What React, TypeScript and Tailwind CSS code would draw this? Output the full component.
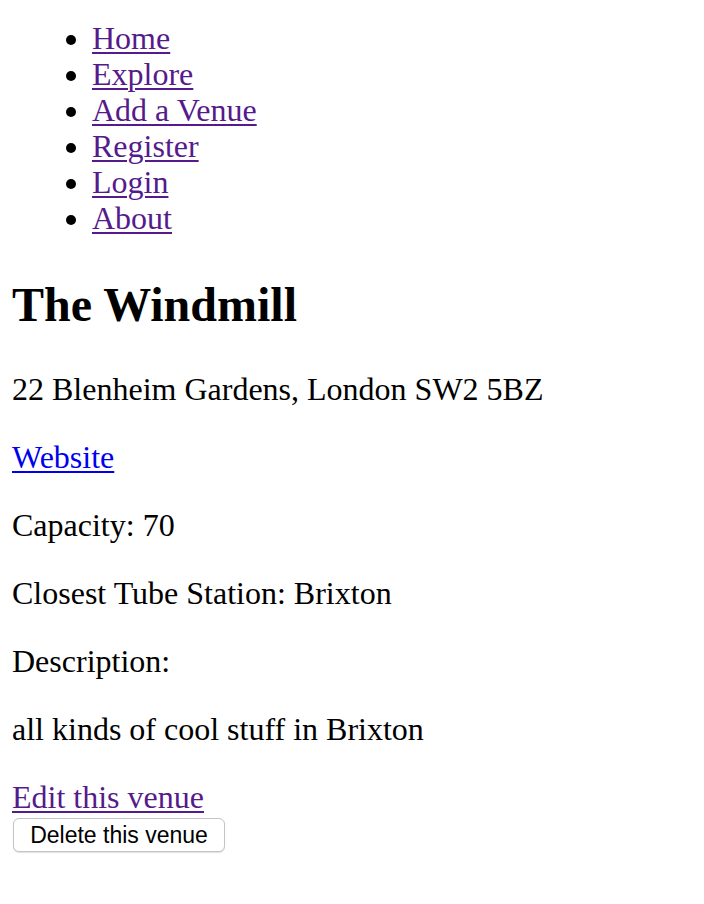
const navLinks = ['Home', 'Explore', 'Add a Venue', 'Register', 'Login', 'About'];

export default function App() {
  return (
    <div className="min-h-[904px] bg-white px-3 pt-5 text-[32px] leading-[36px] text-black font-['Liberation_Serif','Times_New_Roman',serif]">
      <nav>
        <ul className="list-disc pl-20">
          {navLinks.map((name) => (
            <li key={name}>
              <a href="#" className="text-[#551a8b] underline decoration-2 underline-offset-[3px]">
                {name}
              </a>
            </li>
          ))}
        </ul>
      </nav>

      <section>
        <h1 className="mt-[42px] text-[48px] leading-[54px] font-bold">The Windmill</h1>
        <p className="mt-[39px]">22 Blenheim Gardens, London SW2 5BZ</p>
        <p className="mt-8">
          <a href="#" className="text-[#0000ee] underline decoration-2 underline-offset-[3px]">
            Website
          </a>
        </p>
        <p className="mt-8">Capacity: 70</p>
        <p className="mt-8">Closest Tube Station: Brixton</p>
        <p className="mt-8">Description:</p>
        <p className="mt-8">all kinds of cool stuff in Brixton</p>
        <a href="#" className="mt-8 block w-fit text-[#551a8b] underline decoration-2 underline-offset-[3px]">
          Edit this venue
        </a>
        <button
          type="button"
          className="mt-[3px] ml-px flex h-[34px] w-[212px] items-center justify-center rounded-[6px] border border-[#c4c4c4] bg-white pt-px text-[23px] leading-none text-black shadow-[0_1px_1px_rgba(0,0,0,0.12)] font-['Liberation_Sans',Arial,sans-serif]"
        >
          Delete this venue
        </button>
      </section>
    </div>
  );
}
